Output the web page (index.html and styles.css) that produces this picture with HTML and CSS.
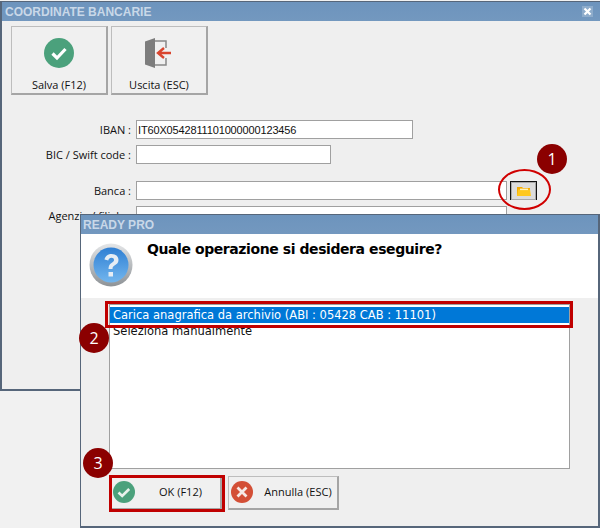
FILE: index.html
```html
<!DOCTYPE html>
<html lang="it">
<head>
<meta charset="utf-8">
<title>Coordinate bancarie</title>
<link rel="stylesheet" href="styles.css">
</head>
<body>
<section class="window main-window">
  <header class="titlebar">
    <span>COORDINATE BANCARIE</span>
    <svg class="close" viewBox="0 0 11 11"><rect width="11" height="11" fill="#8eaccb"/><path d="M2.500 2.500l6 6M8.500 2.500l-6 6" stroke="#fff" stroke-width="2.200"/></svg>
  </header>
  <div class="toolbar">
    <button class="tool">
      <svg viewBox="0 0 30 30" class="tool-icon"><circle cx="15" cy="15" r="15" fill="#4ba17c"/><path d="M8.500 15.500l4.500 4.500 8.500-9" fill="none" stroke="#fff" stroke-width="3.200"/></svg>
      <span>Salva (F12)</span>
    </button>
    <button class="tool">
      <svg viewBox="0 0 30 30" class="tool-icon"><path d="M1 3.500L11 0v30L1 26.500z" fill="#7d7d7d"/><path d="M11 3h11v7M22 20v7H11" fill="none" stroke="#888" stroke-width="1.500"/><path d="M27 15H15M20 10l-6 5 6 5" fill="none" stroke="#d9452e" stroke-width="2.400"/></svg>
      <span>Uscita (ESC)</span>
    </button>
  </div>
  <div class="form">
    <div class="row row-iban"><label>IBAN :</label><input class="f-iban" value="IT60X0542811101000000123456"></div>
    <div class="row row-bic"><label>BIC / Swift code :</label><input class="f-bic"></div>
    <div class="row row-banca">
      <label>Banca :</label><input class="f-banca">
      <button class="browse"><svg viewBox="0 0 16 12"><path d="M1 2h5l1 1h7v8H1z" fill="#f4a900"/><path d="M2 4.500h12l1 6.500H1z" fill="#ffc81e"/><path d="M4 3.600h8v1.500H4z" fill="#fff3b8"/></svg></button>
    </div>
    <div class="row row-agenzia"><label>Agenzia / filiale :</label><input class="f-banca"></div>
    <div class="row row-nazione"><label>Nazione :</label></div>
  </div>
</section>

<section class="window dialog">
  <header class="titlebar titlebar-small"><span>READY PRO</span></header>
  <div class="dialog-head">
    <svg class="question" viewBox="0 0 44 44">
      <defs>
        <linearGradient id="ring" x1="0" y1="0" x2="0" y2="1"><stop offset="0" stop-color="#e4e6e8"/><stop offset="1" stop-color="#8d9296"/></linearGradient>
        <linearGradient id="ball" x1="0" y1="0" x2="0" y2="1"><stop offset="0" stop-color="#2f7fd3"/><stop offset="1" stop-color="#72b6ee"/></linearGradient>
      </defs>
      <circle cx="22" cy="22" r="21.500" fill="url(#ring)"/>
      <circle cx="22" cy="22" r="17.500" fill="url(#ball)"/>
      <path d="M15.500 16.500c1-4 4-5.500 7-5.500 4 0 7 2.300 7 6 0 3-2 4.300-4 5.500-1.500.9-2 1.700-2 3.500h-4c0-3.200 1-4.700 3-6 1.500-1 2.500-1.700 2.500-3 0-1.300-1-2.200-2.500-2.200-1.700 0-2.800 1-3.200 2.700z" fill="#e6edf4"/>
      <rect x="19.500" y="29" width="4.500" height="4.500" fill="#e6edf4"/>
    </svg>
    <h1>Quale operazione si desidera eseguire?</h1>
  </div>
  <div class="dialog-body">
    <ul class="list">
      <li class="selected">Carica anagrafica da archivio (ABI : 05428 CAB : 11101)</li>
      <li>Seleziona manualmente</li>
    </ul>
    <div class="actions">
      <button class="action action-ok">
        <svg viewBox="0 0 22 22"><circle cx="11" cy="11" r="11" fill="#4ba17c"/><path d="M5.500 11.500l3.700 3.500 7-7" fill="none" stroke="#e8f2ec" stroke-width="2.600"/></svg>
        <span>OK (F12)</span>
      </button>
      <button class="action action-cancel">
        <svg viewBox="0 0 22 22"><circle cx="11" cy="11" r="11" fill="#d34f36"/><path d="M6.500 6.500l9 9M15.500 6.500l-9 9" stroke="#f6e9e5" stroke-width="2.800"/></svg>
        <span>Annulla (ESC)</span>
      </button>
    </div>
  </div>
</section>

<div class="mark mark-ring"></div>
<div class="mark mark-row"></div>
<div class="mark mark-ok"></div>
<div class="badge badge-1">1</div>
<div class="badge badge-2">2</div>
<div class="badge badge-3">3</div>
</body>
</html>
```

FILE: styles.css
```css
* { box-sizing: border-box; }
html, body { margin: 0; padding: 0; }
body {
  position: relative;
  width: 600px;
  height: 528px;
  overflow: hidden;
  background: #f1f1f1;
  font-family: "Open Sans", "DejaVu Sans", sans-serif;
  font-size: 11px;
  color: #111;
}
button, input { font: inherit; color: inherit; margin: 0; }

.window { position: absolute; background: #efefef; border: 1px solid #56667a; }
.main-window { left: 0; top: 1px; width: 600px; height: 390px; border-right: 0; border-left-width: 2px; border-bottom-width: 2px; }
.dialog { left: 80px; top: 214px; width: 520px; height: 314px; border-right-width: 2px; border-bottom-width: 2px; }

.titlebar {
  height: 19px;
  display: flex;
  align-items: center;
  justify-content: space-between;
  padding: 0 7px 0 3px;
  background: linear-gradient(#6d94bd, #7398bf);
  color: #c9d8e8;
  font-family: "Liberation Sans", sans-serif;
  font-size: 12px;
  font-weight: 700;
}
.close { width: 11px; height: 11px; }
.titlebar-small { padding-left: 2px; }

.toolbar { display: flex; gap: 3px; padding: 5px 0 0 9px; }
.tool {
  width: 97px;
  height: 69px;
  display: flex;
  flex-direction: column;
  align-items: center;
  padding: 11px 0 0;
  background: #f0f0f0;
  border: 1px solid #bdbdbd;
  border-right: 2px solid #a5a5a5;
  border-bottom: 2px solid #a5a5a5;
}
.tool-icon { width: 30px; height: 30px; }
.tool span { margin-top: 9px; }

.form { display: flex; flex-direction: column; padding-top: 25px; }
.row { display: flex; align-items: center; height: 19px; }
.row label { width: 129px; text-align: right; margin-right: 5px; flex: none; }
.row input { height: 19px; background: #fff; border: 1px solid #a0a0a0; padding: 0 1px; outline: 0; flex: none; }
.row-bic { margin-top: 6px; }
.row-banca { margin-top: 17px; }
.row-agenzia { margin-top: 6px; }
.row-nazione { margin-top: 78px; }
.f-iban { width: 277px; font-family: "Liberation Sans", sans-serif; letter-spacing: -.15px; }
.f-bic { width: 195px; }
.f-banca { width: 371px; }

.browse {
  width: 27px;
  height: 19px;
  margin-left: 3px;
  padding: 0;
  display: flex;
  align-items: center;
  justify-content: center;
  background: #dcdcdc;
  border: 1px solid #111;
  border-width: 1px 1px 0;
  box-shadow: inset 0 0 0 1px #a8a8a8;
}
.browse svg { width: 16px; height: 12px; }

.dialog-head { display: flex; gap: 14px; height: 64px; padding: 9px 0 0 8px; background: #fff; }
.question { width: 44px; height: 44px; flex: none; }
.dialog-head h1 { margin: -2px 0 0; font-family: "DejaVu Sans", sans-serif; font-size: 14px; font-weight: 700; letter-spacing: -.42px; color: #000; }
.dialog-body { padding: 0 0 0 28px; }
.list {
  list-style: none;
  width: 461px;
  height: 165px;
  margin: 6px 0 0;
  padding: 2px 0;
  background: #fff;
  border: 1px solid #a0a0a0;
  font-family: "DejaVu Sans", sans-serif;
  font-size: 11.500px;
  line-height: 16px;
}
.list li { padding-left: 3px; white-space: nowrap; }
.list .selected { background: #0078d7; color: #fff; }
.actions { display: flex; gap: 6px; margin-top: 7px; padding-left: 1px; }
.action {
  height: 34px;
  display: flex;
  align-items: center;
  padding: 0 0 2px 2px;
  background: #f0f0f0;
  border: 1px solid #bdbdbd;
  border-right: 2px solid #a5a5a5;
  border-bottom: 2px solid #a5a5a5;
}
.action svg { width: 22px; height: 22px; flex: none; }
.action span { flex: 1; text-align: center; padding-left: 6px; }
.action-ok { width: 112px; }
.action-cancel { width: 111px; }

.mark { position: absolute; pointer-events: none; }
.mark-ring { left: 498px; top: 169px; width: 53px; height: 41px; border: 2px solid #d00000; border-radius: 50%; }
.mark-row { left: 105px; top: 301px; width: 468px; height: 27px; border: 3px solid #c00000; }
.mark-ok { left: 109px; top: 475px; width: 116px; height: 37px; border: 3px solid #c00000; }

.badge {
  position: absolute;
  width: 30px;
  height: 30px;
  border-radius: 50%;
  background: #8b0000;
  color: #fff;
  display: flex;
  align-items: center;
  justify-content: center;
  font-family: "Open Sans", sans-serif;
  font-size: 16px;
}
.badge-1 { left: 537px; top: 144px; }
.badge-2 { left: 79px; top: 323px; }
.badge-3 { left: 83px; top: 448px; }
```
